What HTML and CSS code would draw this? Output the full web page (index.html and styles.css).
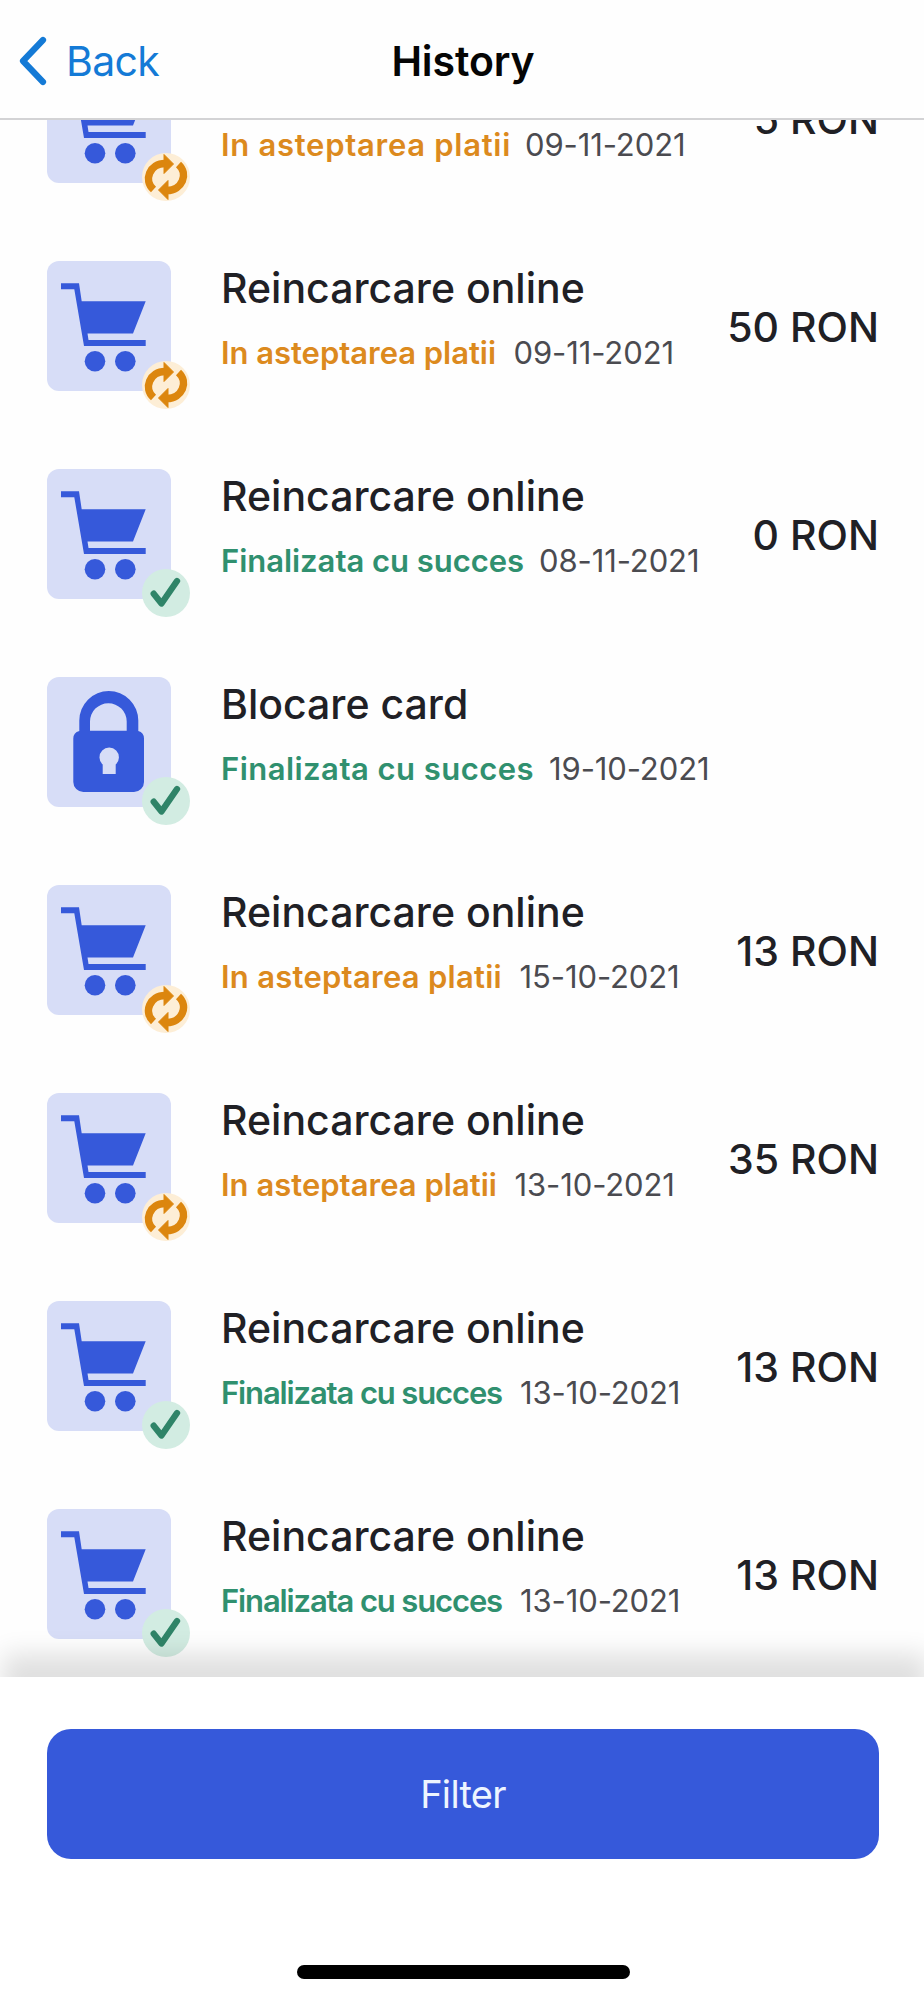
FILE: index.html
```html
<!DOCTYPE html>
<html lang="ro"><head><meta charset="utf-8"><title>History</title>
<link rel="stylesheet" href="styles.css"></head>
<body>
<svg class="defs" aria-hidden="true">
  <symbol id="cart" viewBox="0 0 124 130">
    <path d="M14 22.3H32L34.7 40.3H98.7L86 72.5H40.5L41.5 79H98.7V85H37L27.3 28.3H14Z"/>
    <circle cx="48" cy="100.3" r="10.3"/><circle cx="78.3" cy="100.3" r="10.3"/>
  </symbol>
  <symbol id="lock" viewBox="0 0 124 130">
    <path fill-rule="evenodd" d="M32.3 54V43.5a29.5 29.5 0 0 1 59 0V54a8 8 0 0 1 5.7 8V105a10 10 0 0 1-10 10H36.300a10 10 0 0 1-10-10V62a8 8 0 0 1 6-8ZM43 53.700H79.700V44.600a18.350 18.350 0 0 0-36.700 0ZM55.700 87.500V97H68.700V87.500A9.700 9.700 0 1 0 55.700 87.500Z"/>
  </symbol>
  <symbol id="check" viewBox="0 0 48 48"><path d="M11.700 24.700L19.500 34.500L35 12" fill="none" stroke="#2f8468" stroke-width="6.300" stroke-linecap="round" stroke-linejoin="round"/></symbol>
  <symbol id="sync" viewBox="0 0 48 48">
    <g id="half"><path d="M11.500 36.500C1 27 8 10.500 23 10.500" fill="none" stroke="#dc860e" stroke-width="7.500"/><path d="M22 1.500L31.500 11L22 20.500Z" fill="#dc860e" stroke="#dc860e" stroke-linejoin="round"/></g>
    <use href="#half" transform="rotate(180 24 24)"/>
  </symbol>
</svg>
<div class="screen">
  <header class="bar">
    <a class="back"><svg class="chevron" viewBox="0 0 28 50"><path d="M24 4L4 25L24 46"/></svg><span>Back</span></a>
    <h1 class="heading">History</h1>
    <span></span>
  </header>
  <main class="list" id="list"></main>
  <footer class="panel">
    <button class="filter">Filter</button>
    <div class="home"></div>
  </footer>
</div>
<script src="app.js"></script>
</body></html>
```
FILE: app.js
```js
// icon, title, state, date, amount, label measure, column measure
const rows = [
  ["cart", "Reincarcare online", "wait", "09-11-2021", "5 RON", 290, 304],
  ["cart", "Reincarcare online", "wait", "09-11-2021", "50 RON", 275, 292.5],
  ["cart", "Reincarcare online", "done", "08-11-2021", "0 RON", 303, 318],
  ["lock", "Blocare card", "done", "19-10-2021", "", 313, 328],
  ["cart", "Reincarcare online", "wait", "15-10-2021", "13 RON", 281, 298.5],
  ["cart", "Reincarcare online", "wait", "13-10-2021", "35 RON", 276, 293.5],
  ["cart", "Reincarcare online", "done", "13-10-2021", "13 RON", 281, 299],
  ["cart", "Reincarcare online", "done", "13-10-2021", "13 RON", 281, 299],
];
const labels = { wait: "In asteptarea platii", done: "Finalizata cu succes" };
const icons = { wait: "sync", done: "check" };
const list = document.getElementById("list");
for (const [icon, title, state, date, amount, measure, column] of rows) {
  const row = document.createElement("article");
  row.className = "row";
  row.innerHTML = `
    <div class="tile"><svg class="glyph"><use href="#${icon}"/></svg>
      <span class="badge ${state}"><svg><use href="#${icons[state]}"/></svg></span></div>
    <div class="info"><h2 class="title">${title}</h2>
      <p class="meta"><span class="status ${state}">${labels[state]}</span><span class="date">${date}</span></p></div>
    <div class="amount">${amount}</div>`;
  list.append(row);
  // Each status label is tracked to fill its own measure.
  const status = row.querySelector(".status");
  const extra = measure - status.getBoundingClientRect().width;
  status.style.letterSpacing = extra / status.textContent.length + "px";
  status.style.width = column + "px";
}
```
FILE: styles.css
```css
*{box-sizing:border-box}
body{margin:0;background:#fff;font-family:Inter,"Liberation Sans",sans-serif}
h1,h2,p{margin:0}
.defs{display:none}
.screen{height:2000px;display:flex;flex-direction:column;overflow:hidden;background:#fefefe}
.bar{flex:none;height:120px;display:grid;grid-template-columns:1fr auto 1fr;align-items:center;border-bottom:2px solid #d3d3d5;background:#fefefe;padding:3px 17px 0 19px;position:relative;z-index:2}
.back{display:flex;align-items:center;gap:19px;color:#147ad6;font-size:41px;letter-spacing:-.7px}
.chevron{width:28px;height:50px;fill:none;stroke:#147ad6;stroke-width:6.200;stroke-linecap:round;stroke-linejoin:round}
.heading{font-size:41px;line-height:50px;font-weight:600;letter-spacing:-.1px;color:#050505}
.list{flex:none;height:1557px;overflow:hidden;display:flex;flex-direction:column;justify-content:flex-end;padding:0 45px 38px 47px}
.row{flex:none;height:130px;margin-top:78px;display:flex}
.tile{position:relative;flex:none;width:124px;height:130px;border-radius:12px;background:#d7ddf7}
.glyph{display:block;width:124px;height:130px;fill:#3659da}
.badge{position:absolute;left:95px;top:100px;width:48px;height:48px;border-radius:50%}
.badge svg{display:block;width:48px;height:48px}
.badge.done{background:#d2ece2}
.badge.wait{background:#fdeed6}
.info{flex:1;padding:3px 0 0 50px}
.title{font-size:41px;line-height:48px;font-weight:500;color:#202025;letter-spacing:0;white-space:nowrap}
.meta{display:flex;align-items:baseline;margin-top:22px;font-size:31px;line-height:38px;white-space:nowrap}
.status{flex:none;font-weight:600}
.status.wait{color:#dc8a1e}
.status.done{color:#30906f}
.date{color:#4b4b50;letter-spacing:-.1px}
.amount{flex:none;font-size:41px;line-height:48px;font-weight:500;color:#202025;padding-top:42px}
.panel{flex:1;position:relative;z-index:1;background:#fff;box-shadow:3px -23px 24px rgba(0,0,0,.12);padding:52px 45px 21px 47px;display:flex;flex-direction:column;align-items:center;justify-content:space-between}
.filter{width:100%;height:130px;border:0;border-radius:24px;background:#3659da;color:#edf5ff;font:400 38px Inter,sans-serif;letter-spacing:-.7px}
.home{width:333px;height:14px;border-radius:7px;background:#000}
```
